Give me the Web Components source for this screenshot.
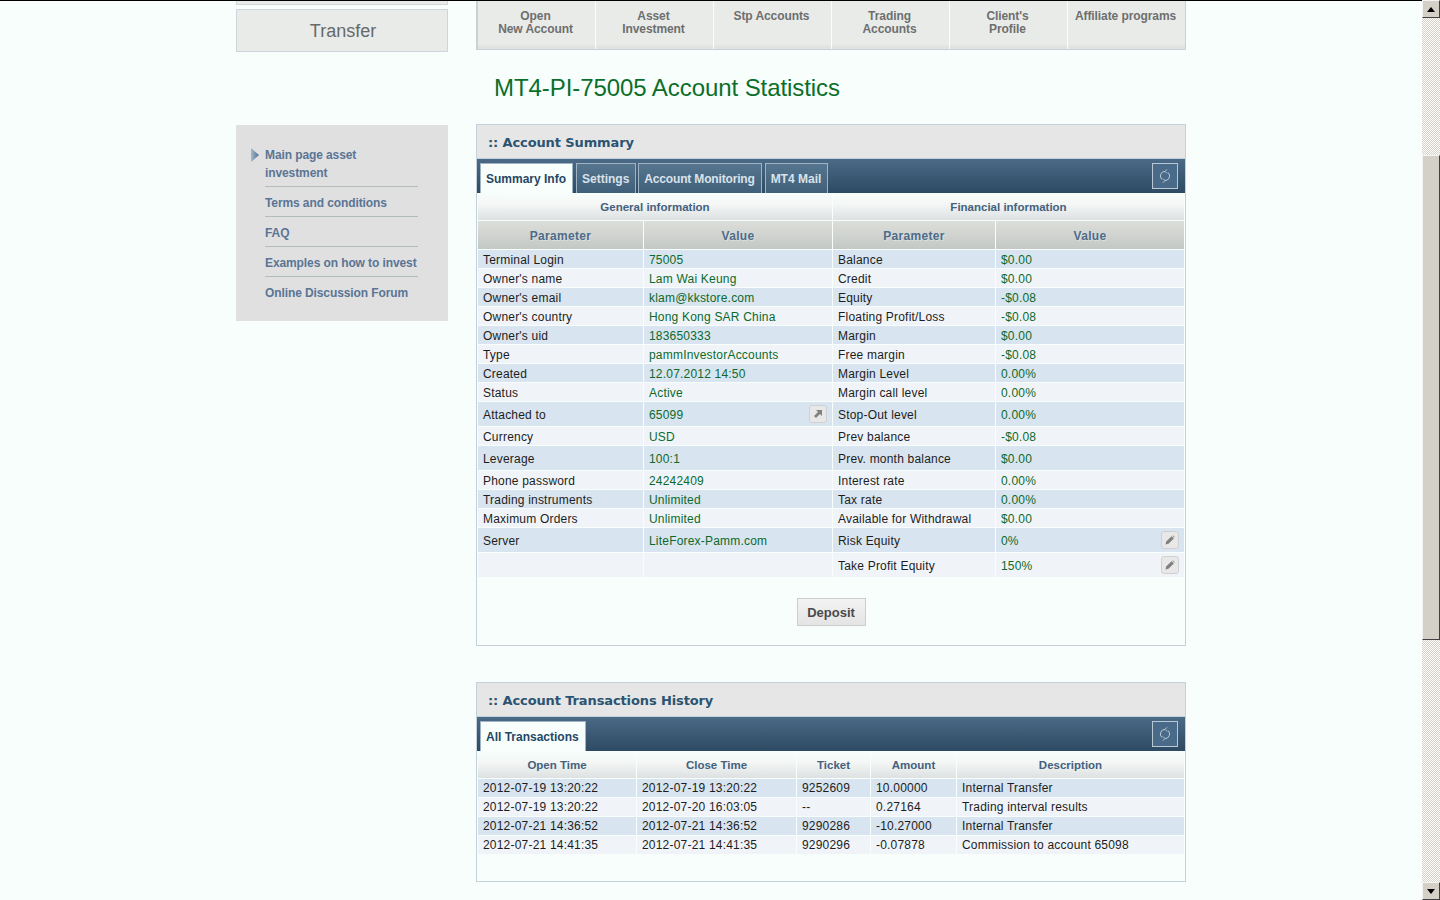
<!DOCTYPE html>
<html>
<head>
<meta charset="utf-8">
<title>MT4-PI-75005 Account Statistics</title>
<style>
  html, body { margin: 0; height: 900px; overflow: hidden; background: #f8fefb; }
</style>
</head>
<body>
<cabinet-page></cabinet-page>
<script>
const ICONS = {
  refresh: '<svg width="14" height="16" viewBox="0 0 14 16" fill="none" stroke="#bccbd6" stroke-width="1"><path d="M7 3.4A4.6 4.6 0 0 0 3.9 11.4"/><path d="M7 12.6A4.6 4.6 0 0 0 10.1 4.6"/><path d="M9 1.4 7 3.4l2 2"/><path d="M5 10.6l2 2-2 2"/></svg>',
  arrow: '<svg width="12" height="12" viewBox="0 0 12 12" fill="#808080"><path d="M4 2h6v6L8 6 4 10 2 8l4-4z"/></svg>',
  pencil: '<svg width="12" height="12" viewBox="0 0 12 12"><path d="M1.5 10.5 2.2 7.5 7.5 2.2 9.8 4.5 4.5 9.8z" fill="#808080"/><path d="M9 1.2 10.8 3 10.1 3.7 8.3 1.9z" fill="#999"/></svg>'
};

class SideBox extends HTMLElement {
  constructor() {
    super();
    this.attachShadow({ mode: 'open' }).innerHTML = `
    <style>
      :host{
        display: block;
        box-sizing: border-box;
        width: 212px;
        padding-left: 2px;
        border: 1px solid #cdd6da;
        background: #e9ebe9;
        color: #666a68;
        font: 18px/43px "Liberation Sans", sans-serif;
        text-align: center;
      }
    </style>
    <slot></slot>`;
  }
}
customElements.define('side-box', SideBox);

class SideMenu extends HTMLElement {
  connectedCallback() {
    const items = ['Main page asset investment', 'Terms and conditions', 'FAQ', 'Examples on how to invest', 'Online Discussion Forum'];
    this.attachShadow({ mode: 'open' }).innerHTML = `
    <style>
      :host{
        display: block;
        box-sizing: border-box;
        width: 212px;
        padding: 14px 30px 15px 29px;
        background: #e0e0e0;
      }
      a{
        position: relative;
        display: block;
        padding: 7px 0 4px 0;
        border-bottom: 1px solid #b2bcbc;
        font: bold 12px/18px "Liberation Sans", sans-serif;
        letter-spacing: -0.1px;
        color: #5a7595;
      }
      a:last-child{ border-bottom: 0; }
      a.first{ padding-right: 50px; }
      svg{
        position: absolute;
        left: -14px;
        top: 9px;
      }
    </style>
    ${items.map((t, i) => `<a class="${i === 0 ? 'first' : ''}">${i === 0 ? '<svg width="8" height="14" viewBox="0 0 8 14"><defs><linearGradient id="g"><stop offset="0" stop-color="#a8bacb"/><stop offset="1" stop-color="#4f7094"/></linearGradient></defs><path d="M0 0l8 7L0 14z" fill="url(#g)"/></svg>' : ''}${t}</a>`).join('')}`;
  }
}
customElements.define('side-menu', SideMenu);

class TopNav extends HTMLElement {
  connectedCallback() {
    const items = ['Open<br>New Account', 'Asset<br>Investment', 'Stp Accounts', 'Trading<br>Accounts', "Client's<br>Profile", 'Affiliate programs'];
    this.attachShadow({ mode: 'open' }).innerHTML = `
    <style>
      :host{
        display: flex;
        box-sizing: border-box;
        width: 710px;
        height: 49px;
        border: 1px solid #c8d2d6;
        border-left-width: 2px;
        border-top: 0;
      }
      a{
        flex: 0 0 118px;
        box-sizing: border-box;
        padding: 9px 2px 0 0;
        border-right: 1px solid #f8fefb;
        background: linear-gradient(#e9ebe9, #e9ebe9 44px, #e2e2e2 45px);
        color: #6d6f6f;
        font: bold 12px/13px "Liberation Sans", sans-serif;
        letter-spacing: -0.08px;
        text-align: center;
      }
      a:last-child{ flex: 1; border-right: 0; }
    </style>
    ${items.map(t => `<a>${t}</a>`).join('')}`;
  }
}
customElements.define('top-nav', TopNav);

class PanelTabs extends HTMLElement {
  connectedCallback() {
    const tabs = this.getAttribute('tabs').split('|');
    this.attachShadow({ mode: 'open' }).innerHTML = `
    <style>
      :host{
        display: flex;
        align-items: flex-end;
        height: 35px;
        padding-left: 3px;
        padding-right: 7px;
        border-top: 1px solid #c3d2da;
        background: linear-gradient(#4b6a87, #2e4a63);
        box-sizing: border-box;
      }
      a{
        box-sizing: border-box;
        height: 30px;
        margin-right: 3px;
        padding: 0 6px 0 5px;
        border: 1px solid #9fb3c2;
        border-bottom: 0;
        background: linear-gradient(#56768f, #3f5f7a);
        color: #d9e2ea;
        font: bold 12px/31px "Liberation Sans", sans-serif;
        white-space: nowrap;
      }
      a.narrow-gap{ margin-right: 2px; }
      a.tight{ letter-spacing: -0.17px; }
      a.active{
        background: #f8fefb;
        color: #1f4766;
      }
      button{
        margin: 0 0 4px auto;
        box-sizing: border-box;
        width: 26px;
        height: 26px;
        padding: 0;
        display: flex;
        align-items: center;
        justify-content: center;
        border: 1px solid #b9c9d3;
        background: #4a6a89;
      }
    </style>
    ${tabs.map((t, i) => `<a class="${i === 0 ? 'active' : ''} ${i === 1 ? 'narrow-gap' : ''} ${i === 2 ? 'tight' : ''}">${t}</a>`).join('')}
    <button>${ICONS.refresh}</button>`;
  }
}
customElements.define('panel-tabs', PanelTabs);

class InfoPanel extends HTMLElement {
  connectedCallback() {
    this.attachShadow({ mode: 'open' }).innerHTML = `
    <style>
      :host{
        display: block;
        box-sizing: border-box;
        width: 710px;
        border: 1px solid #c3d2da;
      }
      .title{
        height: 33px;
        box-sizing: border-box;
        padding-left: 11px;
        background: #e6e6e6;
        color: #2b5472;
        font: bold 13px/36px "DejaVu Sans", sans-serif;
        letter-spacing: -0.12px;
      }
    </style>
    <div class="title">:: ${this.getAttribute('heading')}</div>
    <slot></slot>`;
  }
}
customElements.define('info-panel', InfoPanel);

// rows: array of {h, cells}, cell text goes as is, a cell can carry an icon
class DataTable extends HTMLElement {
  set config(cfg) {
    const colgroup = cfg.cols.map(w => `<col style="width:${w}px">`).join('');
    const head = (cfg.head || []).map(r => `<tr class="${r.cls}" style="height:${r.h}px">` +
      r.cells.map(c => `<th colspan="${c.span || 1}">${c.text}</th>`).join('') + '</tr>').join('');
    const body = cfg.rows.map((r, i) => `<tr class="${i % 2 ? 'even' : 'odd'}" style="height:${r.h || 18}px">` +
      r.cells.map((c, j) => {
        const green = cfg.valueCols && cfg.valueCols.includes(j);
        const icon = r.icons && r.icons[j];
        return `<td class="${green ? 'val' : ''}">${c}${icon ? `<span class="ico">${ICONS[icon]}</span>` : ''}</td>`;
      }).join('') + '</tr>').join('');
    this.attachShadow({ mode: 'open' }).innerHTML = `
    <style>
      :host{ display: block; }
      table{
        table-layout: fixed;
        border-collapse: separate;
        border-spacing: 1px;
        margin-top: -1px;
        width: 708px;
      }
      th{
        padding: 0;
        font: bold 11.5px "Liberation Sans", sans-serif;
        text-align: center;
        color: #44617f;
      }
      .group th{
        background: linear-gradient(#f8fefb, #f4f7f5 40%, #dde1e2);
      }
      .param th{
        padding-top: 2px;
        background: linear-gradient(#dcdeda, #c4c8c4);
        font-size: 12px;
        letter-spacing: 0.3px;
        color: #4d6b8a;
        text-shadow: 1px 1px 0 rgba(255,255,255,0.35);
      }
      td{
        position: relative;
        padding: ${cfg.compact ? 0 : 2}px 0 0 5px;
        font: 12px/14px "Liberation Sans", sans-serif;
        letter-spacing: 0.2px;
        color: #1d1d1d;
        white-space: nowrap;
        overflow: hidden;
      }
      td.val{ color: #0c6a2c; }
      .odd td{ background: #d8e4ef; }
      .even td{ background: #f0f4f9; }
      .ico{
        position: absolute;
        right: 5px;
        top: 50%;
        margin-top: -9px;
        box-sizing: border-box;
        width: 18px;
        height: 18px;
        display: flex;
        align-items: center;
        justify-content: center;
        border: 1px solid #d0d0d0;
        border-radius: 3px;
        background: #e8e8e8;
      }
    </style>
    <table><colgroup>${colgroup}</colgroup>${head}${body}</table>`;
  }
}
customElements.define('data-table', DataTable);

class PageScrollbar extends HTMLElement {
  constructor() {
    super();
    this.attachShadow({ mode: 'open' }).innerHTML = `
    <style>
      :host{
        flex: 0 0 18px;
        display: flex;
        flex-direction: column;
        width: 18px;
        height: 900px;
        background: repeating-conic-gradient(#d4d0c8 0 25%, #ffffff 0 50%) 0 0 / 2px 2px;
      }
      .btn, .thumb{
        box-sizing: border-box;
        background: #d4d0c8;
        border: 1px solid;
        border-color: #f4f3f0 #404040 #404040 #f4f3f0;
      }
      .btn{
        flex: 0 0 18px;
        display: flex;
        align-items: center;
        justify-content: center;
      }
      .thumb{
        flex: 0 0 485px;
        margin-top: 137px;
        margin-bottom: auto;
      }
    </style>
    <div class="btn"><svg width="8" height="5"><path d="M4 0l4 5H0z"/></svg></div>
    <div class="thumb"></div>
    <div class="btn"><svg width="8" height="5"><path d="M0 0h8L4 5z"/></svg></div>`;
  }
}
customElements.define('page-scrollbar', PageScrollbar);

class CabinetPage extends HTMLElement {
  connectedCallback() {
    this.attachShadow({ mode: 'open' }).innerHTML = `
    <style>
      :host{
        display: flex;
        width: 1440px;
        height: 900px;
        overflow: hidden;
        font-family: "Liberation Sans", sans-serif;
      }
      .page{
        flex: 1;
        box-sizing: border-box;
        height: 900px;
        border-top: 1px solid #000;
        padding-left: 236px;
        display: flex;
        gap: 28px;
        overflow: hidden;
      }
      .left{ width: 212px; }
      .stub{ height: 4px; box-sizing: border-box; border: 1px solid #cdd6da; border-top: 0; background: #e9ebe9; margin-bottom: 4px; }
      side-box{ height: 43px; }
      side-menu{ margin-top: 73px; height: 196px; }
      .right{ width: 710px; }
      h1{
        margin: 0;
        padding: 22px 0 0 18px;
        height: 74px;
        box-sizing: border-box;
        font: normal 24px/32px "Liberation Sans", sans-serif;
        letter-spacing: -0.07px;
        color: #0b6e2b;
      }
      .deposit{
        display: flex;
        justify-content: center;
        padding: 20px 0 19px;
      }
      button{
        box-sizing: border-box;
        width: 69px;
        height: 28px;
        padding: 1px 0 0 0;
        border: 1px solid #c8cfc8;
        background: linear-gradient(#f3f3f3, #e4e4e4);
        color: #4a4a4a;
        font: bold 13px "Liberation Sans", sans-serif;
      }
      .second{ margin-top: 36px; height: 200px; }
    </style>
    <div class="page">
      <div class="left">
        <div class="stub"></div>
        <side-box>Transfer</side-box>
        <side-menu></side-menu>
      </div>
      <div class="right">
        <top-nav></top-nav>
        <h1>MT4-PI-75005 Account Statistics</h1>
        <info-panel heading="Account Summary">
          <panel-tabs tabs="Summary Info|Settings|Account Monitoring|MT4 Mail"></panel-tabs>
          <data-table id="summary"></data-table>
          <div class="deposit"><button>Deposit</button></div>
        </info-panel>
        <info-panel class="second" heading="Account Transactions History">
          <panel-tabs tabs="All Transactions"></panel-tabs>
          <data-table id="history"></data-table>
        </info-panel>
      </div>
      </div>
    <page-scrollbar></page-scrollbar>`;

    this.shadowRoot.getElementById('summary').config = {
      cols: [165, 188, 162, 188],
      valueCols: [1, 3],
      head: [
        { cls: 'group', h: 27, cells: [{ text: 'General information', span: 2 }, { text: 'Financial information', span: 2 }] },
        { cls: 'param', h: 28, cells: [{ text: 'Parameter' }, { text: 'Value' }, { text: 'Parameter' }, { text: 'Value' }] }
      ],
      rows: [
        { cells: ['Terminal Login', '75005', 'Balance', '$0.00'] },
        { cells: ["Owner's name", 'Lam Wai Keung', 'Credit', '$0.00'] },
        { cells: ["Owner's email", 'klam@kkstore.com', 'Equity', '-$0.08'] },
        { cells: ["Owner's country", 'Hong Kong SAR China', 'Floating Profit/Loss', '-$0.08'] },
        { cells: ["Owner's uid", '183650333', 'Margin', '$0.00'] },
        { cells: ['Type', 'pammInvestorAccounts', 'Free margin', '-$0.08'] },
        { cells: ['Created', '12.07.2012 14:50', 'Margin Level', '0.00%'] },
        { cells: ['Status', 'Active', 'Margin call level', '0.00%'] },
        { h: 24, icons: { 1: 'arrow' }, cells: ['Attached to', '65099', 'Stop-Out level', '0.00%'] },
        { cells: ['Currency', 'USD', 'Prev balance', '-$0.08'] },
        { h: 24, cells: ['Leverage', '100:1', 'Prev. month balance', '$0.00'] },
        { cells: ['Phone password', '24242409', 'Interest rate', '0.00%'] },
        { cells: ['Trading instruments', 'Unlimited', 'Tax rate', '0.00%'] },
        { cells: ['Maximum Orders', 'Unlimited', 'Available for Withdrawal', '$0.00'] },
        { h: 24, icons: { 3: 'pencil' }, cells: ['Server', 'LiteForex-Pamm.com', 'Risk Equity', '0%'] },
        { h: 24, icons: { 3: 'pencil' }, cells: ['', '', 'Take Profit Equity', '150%'] }
      ]
    };

    this.shadowRoot.getElementById('history').config = {
      cols: [158, 159, 73, 85, 227],
      compact: true,
      head: [
        { cls: 'group', h: 27, cells: ['Open Time', 'Close Time', 'Ticket', 'Amount', 'Description'].map(text => ({ text })) }
      ],
      rows: [
        { cells: ['2012-07-19 13:20:22', '2012-07-19 13:20:22', '9252609', '10.00000', 'Internal Transfer'] },
        { cells: ['2012-07-19 13:20:22', '2012-07-20 16:03:05', '--', '0.27164', 'Trading interval results'] },
        { cells: ['2012-07-21 14:36:52', '2012-07-21 14:36:52', '9290286', '-10.27000', 'Internal Transfer'] },
        { cells: ['2012-07-21 14:41:35', '2012-07-21 14:41:35', '9290296', '-0.07878', 'Commission to account 65098'] }
      ]
    };
  }
}
customElements.define('cabinet-page', CabinetPage);
</script>
</body>
</html>
